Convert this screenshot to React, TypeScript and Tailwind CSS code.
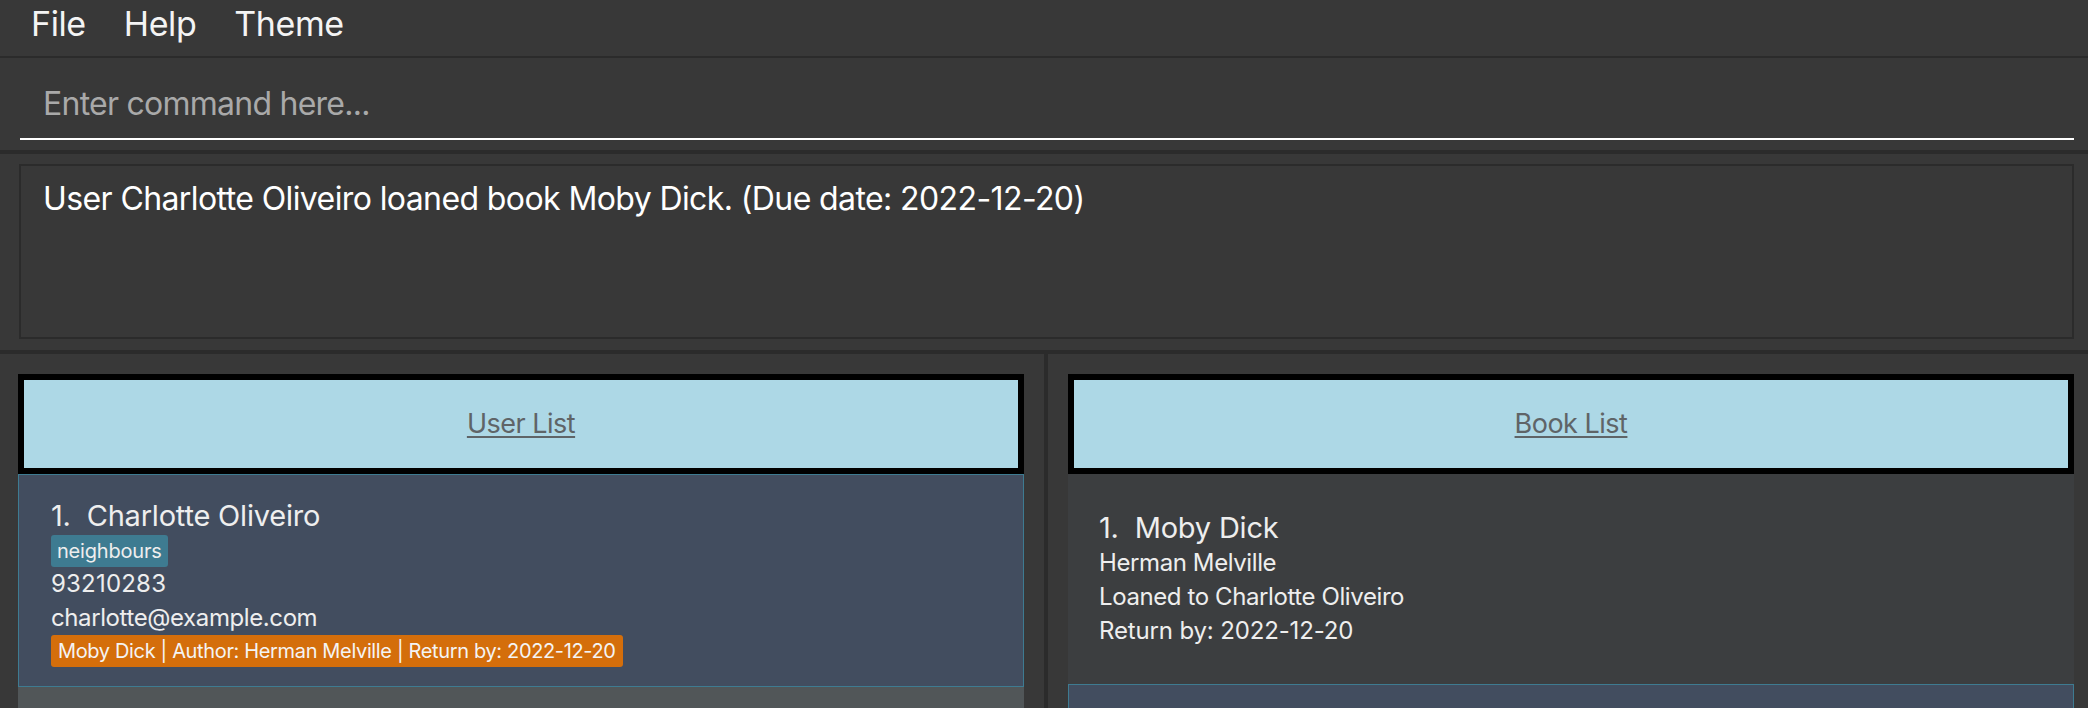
import React from "react";

const font = { fontFamily: "Inter, 'Noto Sans', sans-serif" };

export default function App() {
  return (
    <div
      className="w-[2088px] h-[708px] overflow-hidden bg-[#383838] flex flex-col text-white"
      style={font}
    >
      {/* Menu bar */}
      <div className="h-[58px] shrink-0 border-b-2 border-[#2b2b2b] flex items-start pl-[12px]">
        {["File", "Help", "Theme"].map((m) => (
          <span key={m} className="px-[19px] text-[34px] leading-[47px] tracking-[-0.4px] text-[#f4f4f4]">
            {m}
          </span>
        ))}
      </div>

      {/* Command box */}
      <div className="h-[96px] shrink-0 border-b-4 border-[#2b2b2b] pl-[20px] pr-[14px]">
        <div className="h-[82px] pt-[26px] pb-[14px] border-b-2 border-white pl-[23px]">
          <input
            className="w-full h-[40px] bg-transparent outline-none text-[32px] leading-[40px] tracking-[-0.75px] text-white placeholder:text-[#a9a9a9]"
            placeholder="Enter command here..."
            readOnly
          />
        </div>
      </div>

      {/* Result display */}
      <div className="h-[200px] shrink-0 border-b-4 border-[#2b2b2b] pt-[10px] pl-[19px] pr-[14px]">
        <div className="h-[175px] border-2 border-[#2b2b2b] pl-[22px] pt-[13px]">
          <p className="text-[32px] leading-[40px] tracking-[-0.6px] text-white">
            User Charlotte Oliveiro loaned book Moby Dick. (Due date: 2022-12-20)
          </p>
        </div>
      </div>

      {/* Lists */}
      <div className="flex-1 flex min-h-0">
        {/* User list */}
        <div className="w-[1044px] shrink-0 pl-[18px] pr-[20px] pt-[20px] flex flex-col">
          <div className="h-[100px] shrink-0 border-[6px] border-black bg-[#add8e6] flex items-center justify-center">
            <span className="text-[27px] leading-[40px] tracking-[-0.5px] text-[#5f6467] underline underline-offset-[3px] decoration-[1.5px]">
              User List
            </span>
          </div>
          <div className="h-[213px] shrink-0 bg-[#424d5f] border border-[#3e7b91] pl-[32px] pt-[23px]">
            <div className="text-[29px] leading-[36px] tracking-[-0.2px] text-[#eeeeee] whitespace-pre">1.  Charlotte Oliveiro</div>
            <div className="flex mt-[1px]">
              <span className="h-[32px] px-[6px] rounded-[3px] bg-[#3e7b91] text-[20px] leading-[32px] tracking-[-0.2px] text-[#eeeeee]">
                neighbours
              </span>
            </div>
            <div className="text-[24px] leading-[34px] tracking-[0.2px] text-[#eeeeee]">93210283</div>
            <div className="text-[24px] leading-[34px] tracking-[-0.4px] text-[#eeeeee]">charlotte@example.com</div>
            <div className="flex">
              <span className="h-[32px] px-[7px] rounded-[3px] bg-[#d46e0b] text-[20px] leading-[32px] tracking-[-0.35px] text-[#f4f4f4]">
                Moby Dick | Author: Herman Melville | Return by: 2022-12-20
              </span>
            </div>
          </div>
          <div className="flex-1 bg-[#515658]" />
        </div>

        {/* Divider */}
        <div className="w-[4px] shrink-0 bg-[#2b2b2b]" />

        {/* Book list */}
        <div className="flex-1 pl-[20px] pr-[14px] pt-[20px] flex flex-col">
          <div className="h-[100px] shrink-0 border-[6px] border-black bg-[#add8e6] flex items-center justify-center">
            <span className="text-[27px] leading-[40px] tracking-[-0.5px] text-[#5f6467] underline underline-offset-[3px] decoration-[1.5px]">
              Book List
            </span>
          </div>
          <div className="h-[210px] shrink-0 bg-[#3c3e40] pl-[31px] pt-[36px]">
            <div className="text-[29px] leading-[36px] tracking-[-0.2px] text-[#eeeeee] whitespace-pre">1.  Moby Dick</div>
            <div className="text-[24px] leading-[34px] tracking-[-0.4px] text-[#eeeeee]">Herman Melville</div>
            <div className="text-[24px] leading-[34px] tracking-[-0.4px] text-[#eeeeee]">Loaned to Charlotte Oliveiro</div>
            <div className="text-[24px] leading-[34px] tracking-[-0.15px] text-[#eeeeee]">Return by: 2022-12-20</div>
          </div>
          <div className="flex-1 bg-[#424d5f] border-t border-x border-[#3e7b91]" />
        </div>
      </div>
    </div>
  );
}
